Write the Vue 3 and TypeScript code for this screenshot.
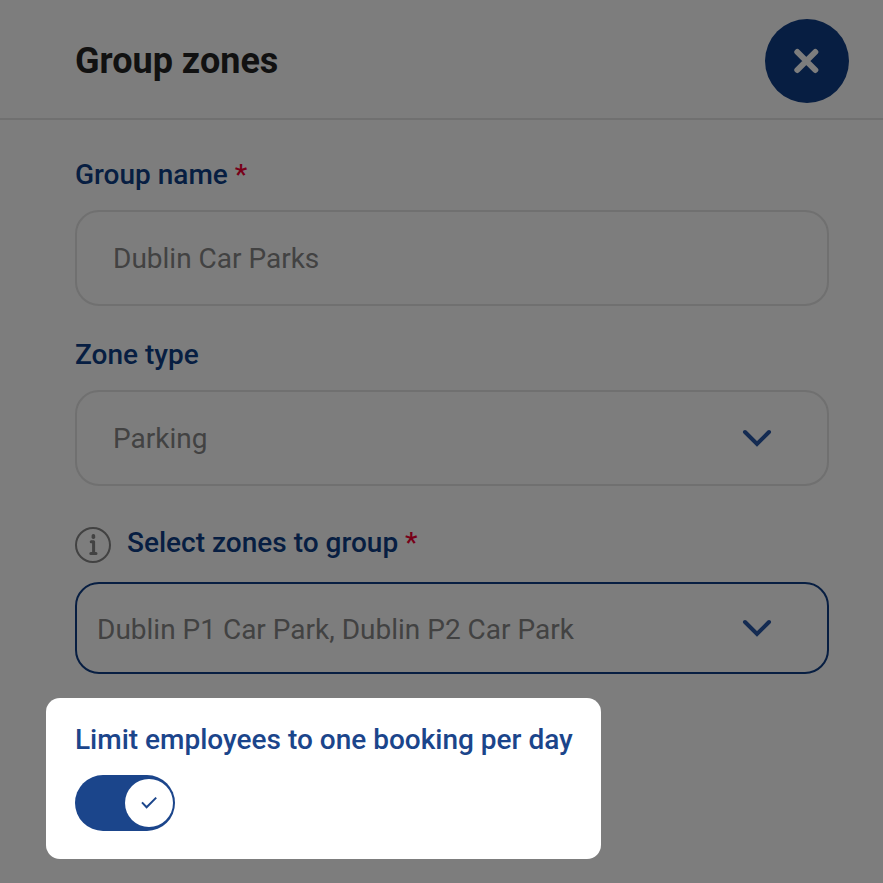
<script setup lang="ts">
import { ref } from 'vue'

const groupName = ref<string>('Dublin Car Parks')
const zoneType = ref<string>('Parking')
const zones = ref<string>('Dublin P1 Car Park, Dublin P2 Car Park')
const limitBookings = ref<boolean>(true)
</script>

<template>
  <div class="dialog">
    <header class="header">
      <h1 class="title">Group zones</h1>
      <button class="close" type="button" aria-label="Close">
        <svg width="26" height="26" viewBox="0 0 26 26" aria-hidden="true">
          <path d="M3.3 4L21.3 22M21.3 4L3.3 22" />
        </svg>
      </button>
    </header>

    <form class="form" @submit.prevent>
      <div class="field">
        <label class="label" for="group-name">Group name <span class="required">*</span></label>
        <input id="group-name" v-model="groupName" class="control" type="text" />
      </div>

      <div class="field">
        <label class="label" for="zone-type">Zone type</label>
        <div class="select">
          <select id="zone-type" v-model="zoneType" class="control">
            <option>Parking</option>
          </select>
          <svg class="chevron" width="32" height="22" viewBox="0 0 32 22" aria-hidden="true">
            <path d="M4 5L16 17L28 5" />
          </svg>
        </div>
      </div>

      <div class="field zones">
        <div class="label-row">
          <svg class="info" width="36" height="36" viewBox="0 0 36 36" aria-hidden="true">
            <circle class="ring" cx="18" cy="18" r="17" />
            <rect class="mark" x="16.6" y="7" width="3.6" height="5" rx="1.7" />
            <path class="stem" d="M16.2 14.8H18.6V26.6M15.8 26.6H21" />
          </svg>
          <label class="label" for="zones">Select zones to group <span class="required">*</span></label>
        </div>
        <div class="select">
          <select id="zones" v-model="zones" class="control active">
            <option>Dublin P1 Car Park, Dublin P2 Car Park</option>
          </select>
          <svg class="chevron" width="32" height="22" viewBox="0 0 32 22" aria-hidden="true">
            <path d="M4 5L16 17L28 5" />
          </svg>
        </div>
      </div>

      <div class="spotlight">
        <label class="label" for="limit">Limit employees to one booking per day</label>
        <div class="toggle">
          <input id="limit" v-model="limitBookings" class="switch" type="checkbox" role="switch" />
          <span class="knob" :class="{ on: limitBookings }">
            <svg v-if="limitBookings" width="18" height="14" viewBox="0 0 18 14" aria-hidden="true">
              <path d="M2 6.4L6.6 11.2L16.2 1.6" />
            </svg>
          </span>
        </div>
      </div>
    </form>
  </div>
</template>

<style>
body {
  margin: 0;
  background: #7d7d7d;
}
</style>

<style scoped>
.dialog {
  box-sizing: border-box;
  min-height: 100vh;
  background: #7d7d7d;
  font-family: Roboto, "Liberation Sans", sans-serif;
  font-size: 28px;
  line-height: 34px;
}

.header {
  display: flex;
  align-items: center;
  justify-content: space-between;
  padding: 19px 34px 15px 75px;
  border-bottom: 2px solid #707070;
}

.title {
  margin: 0;
  color: #111111;
  font-size: 36px;
  font-weight: 700;
  line-height: 40px;
}

.close {
  display: grid;
  place-items: center;
  width: 84px;
  height: 84px;
  padding: 0;
  border: 0;
  border-radius: 50%;
  background: #071e42;
  cursor: pointer;
}

.close path {
  fill: none;
  stroke: #7d7d7d;
  stroke-width: 6;
  stroke-linecap: round;
}

.form {
  display: flex;
  flex-direction: column;
  gap: 32px;
  padding: 38px 54px 24px 46px;
}

.field {
  display: flex;
  flex-direction: column;
  gap: 18px;
  padding-left: 29px;
}

.label {
  color: #071e42;
  font-weight: 500;
}

.required {
  color: #780018;
}

.control {
  box-sizing: border-box;
  width: 100%;
  height: 96px;
  margin: 0;
  padding: 0 36px;
  border: 2px solid #707070;
  border-radius: 24px;
  outline: 0;
  appearance: none;
  background: transparent;
  color: #424242;
  font: inherit;
}

.select {
  display: grid;
  align-items: center;
}

.select > * {
  grid-area: 1 / 1;
}

.select .control {
  padding-top: 2px;
}

.chevron {
  justify-self: end;
  margin-right: 56px;
  pointer-events: none;
}

.chevron path {
  fill: none;
  stroke: #142b52;
  stroke-width: 4;
  stroke-linecap: round;
}

.zones {
  padding-top: 8px;
}

.label-row {
  display: flex;
  align-items: flex-start;
  gap: 16px;
  height: 38px;
}

.info {
  margin-top: 1px;
}

.ring,
.stem {
  fill: none;
  stroke: #424242;
  stroke-width: 2;
}

.stem {
  stroke-width: 3;
  stroke-linecap: round;
  stroke-linejoin: round;
}

.mark {
  fill: #424242;
}

.select .active {
  height: 92px;
  padding: 4px 20px 0;
  border-color: #071e42;
}

.spotlight {
  display: flex;
  flex-direction: column;
  gap: 18px;
  width: fit-content;
  margin-top: -8px;
  padding: 25px 28px 28px 29px;
  border-radius: 14px;
  background: #ffffff;
}

.spotlight .label {
  color: #1b458b;
}

.toggle {
  display: grid;
  align-items: center;
  width: 100px;
}

.toggle > * {
  grid-area: 1 / 1;
}

.switch {
  width: 100px;
  height: 56px;
  margin: 0;
  border-radius: 28px;
  appearance: none;
  background: #8a8a8a;
  cursor: pointer;
}

.switch:checked {
  background: #1b458b;
}

.knob {
  display: grid;
  place-items: center;
  width: 48px;
  height: 48px;
  margin: 0 2px;
  border-radius: 50%;
  background: #ffffff;
  pointer-events: none;
}

.knob.on {
  justify-self: end;
}

.knob path {
  fill: none;
  stroke: #1b458b;
  stroke-width: 2;
}
</style>
